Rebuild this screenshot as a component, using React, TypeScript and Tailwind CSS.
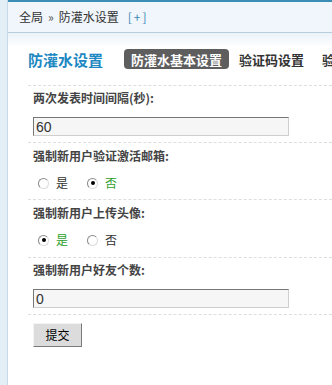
import React from "react";

const font = { fontFamily: '"Noto Sans CJK SC", "Liberation Sans", sans-serif' };

function Radio({ checked, label }: { checked: boolean; label: string }) {
  return (
    <div className="flex items-center">
      <span className="relative w-[11px] h-[11px] rounded-full border border-t-[#8a8a8a] border-l-[#8a8a8a] border-b-[#dcdcdc] border-r-[#dcdcdc] bg-white flex items-center justify-center">
        {checked && <span className="w-[4px] h-[4px] rounded-full bg-black" />}
      </span>
      <span className={`ml-[7px] text-[12px] leading-none ${checked ? "text-[#2ca02c]" : "text-[#333]"}`}>{label}</span>
    </div>
  );
}

function Dashed() {
  return <div className="h-0 border-t border-dashed border-[#dedede] ml-[-5px]" />;
}

function Label({ text, h }: { text: string; h: string }) {
  return (
    <div className={`${h} flex items-center text-[12px] font-bold text-[#444] leading-none`}>{text}</div>
  );
}

function Input({ value }: { value: string }) {
  return (
    <div className="w-[256px] h-[19px] border border-t-[#777] border-l-[#777] border-b-[#cfcfcf] border-r-[#cfcfcf] bg-[#f6f6f6] flex items-center pl-[2px]">
      <span className="text-[14px] text-[#333] leading-none" style={{ fontFamily: '"Liberation Sans", sans-serif' }}>{value}</span>
    </div>
  );
}

export default function App() {
  return (
    <div className="w-[332px] h-[385px] overflow-hidden flex bg-white" style={font}>
      <div className="w-[8px] bg-[#e3eef7] border-r border-[#c7dae8] shrink-0" />
      <div className="flex-1 flex flex-col min-w-0 overflow-hidden">
        <div className="h-[2px] bg-[#3b8db6]" />
        <div className="h-[31px] bg-[#f0f6fb] border-b border-[#b7cedc] flex items-center pl-[11px] text-[12px] text-[#333] whitespace-nowrap">
          <span>全局</span>
          <span className="mx-[5px] text-[#555]">»</span>
          <span>防灌水设置</span>
          <span className="ml-[9px] text-[#3a87b8] tracking-[2px]">[+]</span>
        </div>
        <div className="h-[14px] bg-gradient-to-b from-[#eaf2f9] to-white" />
        <div className="pl-[20px] pt-[2px]">
          <div className="h-[20px] flex items-center whitespace-nowrap">
            <span className="text-[15px] font-bold text-[#1d88c2] leading-none">防灌水设置</span>
            <span className="ml-[21px] h-[20px] px-[7px] rounded-[4px] bg-[#5e5e5e] text-white text-[13px] font-bold flex items-center leading-none">防灌水基本设置</span>
            <span className="ml-[10px] text-[13px] font-bold text-[#333] leading-none">验证码设置</span>
            <span className="ml-[18px] text-[13px] font-bold text-[#333] leading-none">验证问答</span>
          </div>
          <div className="h-[16px]" />
          <div className="pl-[5px]">
            <Dashed />
            <Label text="两次发表时间间隔(秒):" h="h-[24px]" />
            <div className="pt-[7px] pb-[6px]">
              <Input value="60" />
            </div>
            <Dashed />
            <Label text="强制新用户验证激活邮箱:" h="h-[26px]" />
            <div className="h-[28px] flex items-center gap-[19px] pl-[5px]">
              <Radio checked={false} label="是" />
              <Radio checked={true} label="否" />
            </div>
            <div className="h-[2px]" />
            <Dashed />
            <Label text="强制新用户上传头像:" h="h-[26px]" />
            <div className="h-[28px] flex items-center gap-[19px] pl-[5px]">
              <Radio checked={true} label="是" />
              <Radio checked={false} label="否" />
            </div>
            <div className="h-[3px]" />
            <Dashed />
            <Label text="强制新用户好友个数:" h="h-[24px]" />
            <div className="pt-[7px] pb-[6px]">
              <Input value="0" />
            </div>
            <Dashed />
            <div className="pt-[8px]">
              <button className="w-[49px] h-[24px] bg-[#dcdcdc] border border-t-[#f4f4f4] border-l-[#f4f4f4] border-b-[#7a7a7a] border-r-[#7a7a7a] text-[12px] text-black flex items-center justify-center leading-none">提交</button>
            </div>
          </div>
        </div>
      </div>
    </div>
  );
}
